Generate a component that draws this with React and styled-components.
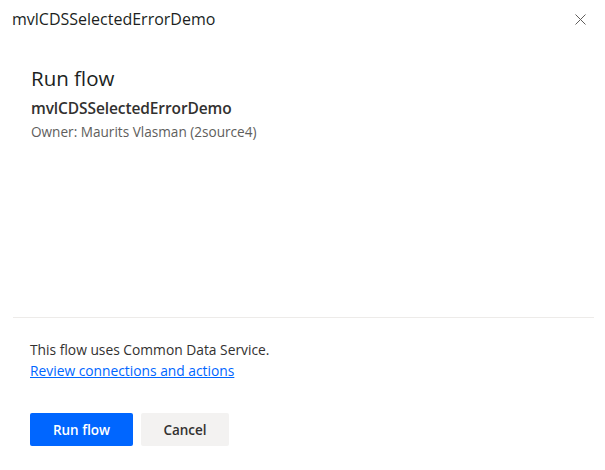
import React from "react";
import styled, { createGlobalStyle } from "styled-components";

const Global = createGlobalStyle`
  html, body { margin: 0; padding: 0; background: #ffffff; }
  body { font-family: "Open Sans", "Noto Sans", Arial, sans-serif; color: #323130; }
`;

const Panel = styled.div`
  width: 605px;
  height: 470px;
  display: flex;
  flex-direction: column;
  box-sizing: border-box;
  background: #fff;
`;

const Header = styled.div`
  display: flex;
  align-items: center;
  justify-content: space-between;
  height: 38px;
  padding: 0 18px 0 12px;
`;

const PanelTitle = styled.div`
  font-size: 16px;
  color: #201f1e;
`;

const CloseButton = styled.button`
  border: none;
  background: transparent;
  padding: 0;
  width: 14px;
  height: 14px;
  display: flex;
  align-items: center;
  justify-content: center;
  cursor: pointer;
`;

const Body = styled.div`
  flex: 1;
  padding: 26px 30px 0 31px;
`;

const Heading = styled.h1`
  margin: 0;
  font-size: 20.5px;
  font-weight: 400;
  color: #201f1e;
  line-height: 28px;
`;

const FlowName = styled.div`
  font-size: 15.5px;
  font-weight: 600;
  color: #323130;
  line-height: 22px;
  margin-top: 5px;
  letter-spacing: -0.1px;
`;

const Owner = styled.div`
  font-size: 13.6px;
  color: #605e5c;
  line-height: 20px;
  margin-top: 3px;
`;

const Footer = styled.div`
  margin: 0 11px 0 13px;
  border-top: 1px solid #edebe9;
  padding: 23px 0 24px 17px;
`;

const Note = styled.div`
  font-size: 13.8px;
  color: #323130;
  line-height: 18px;
`;

const Link = styled.a`
  font-size: 13.8px;
  color: #0066ff;
  text-decoration: underline;
  line-height: 19px;
  display: inline-block;
`;

const Actions = styled.div`
  display: flex;
  gap: 8px;
  margin-top: 32px;
`;

const Button = styled.button`
  height: 33px;
  border: none;
  border-radius: 2px;
  padding: 0 20px;
  font-family: inherit;
  font-size: 13.5px;
  font-weight: 600;
  min-width: ${(p) => p.$min || 80}px;
  background: ${(p) => (p.$primary ? "#0066ff" : "#f3f2f1")};
  color: ${(p) => (p.$primary ? "#ffffff" : "#323130")};
  cursor: pointer;
`;

export default function App() {
  return (
    <>
      <Global />
      <Panel>
        <Header>
          <PanelTitle>mvlCDSSelectedErrorDemo</PanelTitle>
          <CloseButton aria-label="Close">
            <svg width="11" height="11" viewBox="0 0 11 11">
              <path d="M0.5 0.5 L10.5 10.5 M10.5 0.5 L0.5 10.5" stroke="#605e5c" strokeWidth="1" fill="none" />
            </svg>
          </CloseButton>
        </Header>
        <Body>
          <Heading>Run flow</Heading>
          <FlowName>mvlCDSSelectedErrorDemo</FlowName>
          <Owner>Owner: Maurits Vlasman (2source4)</Owner>
        </Body>
        <Footer>
          <Note>This flow uses Common Data Service.</Note>
          <Link href="#">Review connections and actions</Link>
          <Actions>
            <Button $primary $min={103}>Run flow</Button>
            <Button $min={88}>Cancel</Button>
          </Actions>
        </Footer>
      </Panel>
    </>
  );
}
